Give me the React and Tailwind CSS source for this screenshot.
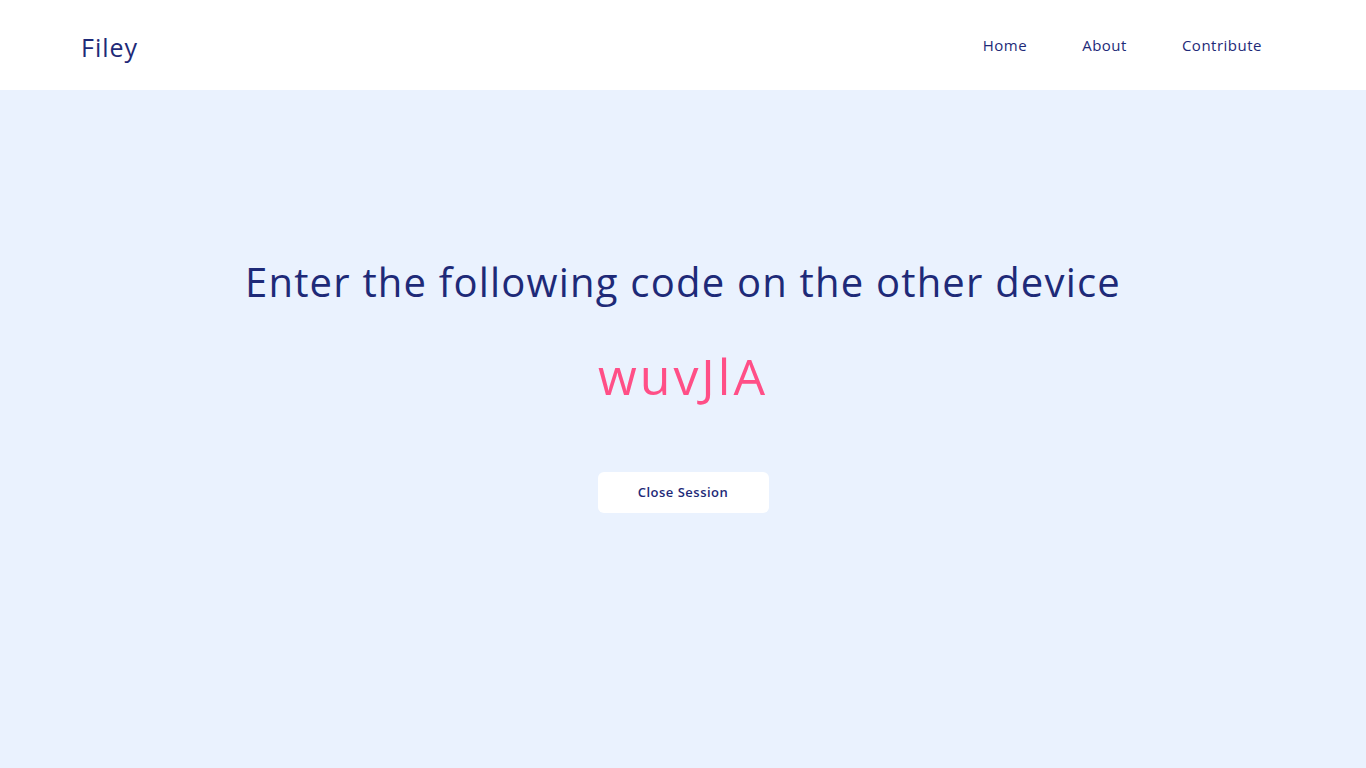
export default function App() {
  return (
    <div className="min-h-screen flex flex-col bg-[#eaf2fe]" style={{ fontFamily: '"Open Sans", "Liberation Sans", sans-serif' }}>
      <header className="h-[90px] bg-white flex items-center justify-between pl-[81px] pr-[104px]">
        <div className="text-[25px] tracking-[1px] text-[#1e2a78] leading-none pt-[4px]">Filey</div>
        <nav className="flex items-center gap-[55px] text-[15px] tracking-[0.5px] text-[#1e2a78]">
          <a>Home</a>
          <a>About</a>
          <a>Contribute</a>
        </nav>
      </header>
      <main className="flex-1 flex flex-col items-center pt-[162px]">
        <h1 className="text-[40px] tracking-[1.2px] leading-[60px] text-[#1e2a78]">Enter the following code on the other device</h1>
        <div className="mt-[28px] text-[50px] tracking-[3px] leading-[72px] text-[#ff4f87]">wuvJlA</div>
        <button className="mt-[60px] w-[171px] h-[41px] bg-white rounded-md text-[13px] tracking-[0.5px] font-semibold text-[#1e2a78]">Close Session</button>
      </main>
    </div>
  );
}
